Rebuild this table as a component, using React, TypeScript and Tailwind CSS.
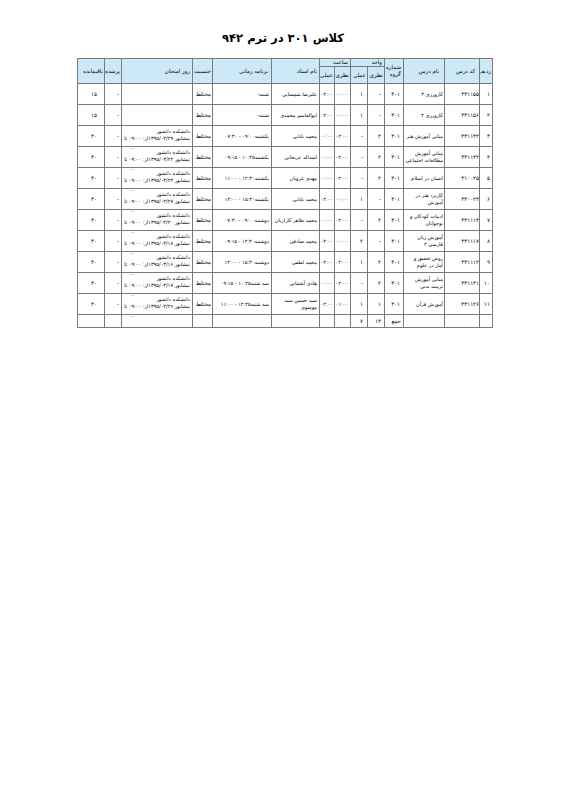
import React from "react";

type Row = {
  n: string;
  code: string;
  name: React.ReactNode;
  group: string;
  un: string;
  ua: string;
  hn: string;
  ha: string;
  teacher: React.ReactNode;
  time: string;
  exam?: string;
  filled: string;
  remain: string;
};

const rows: Row[] = [
  { n: "۱", code: "۳۳۱۱۵۵", name: "کارورزی ۳", group: "۳۰۱", un: "-", ua: "۱", hn: "۰۰:۰۰", ha: "۰۲:۰۰", teacher: "علیرضا شمسایی", time: "شنبه-", filled: "-", remain: "۱۵" },
  { n: "۲", code: "۳۳۱۱۵۶", name: "کارورزی ۴", group: "۳۰۱", un: "-", ua: "۱", hn: "۰۰:۰۰", ha: "۰۲:۰۰", teacher: "ابوالقاسم محمدی", time: "شنبه-", filled: "-", remain: "۱۵" },
  { n: "۳", code: "۳۳۱۱۳۲", name: "مبانی آموزش هنر", group: "۳۰۱", un: "۲", ua: "-", hn: "۰۲:۰۰", ha: "۰۰:۰۰", teacher: "محمد بابایی", time: "یکشنبه۰۹:۰۰ - ۰۷:۳۰", exam: "۱۳۹۵/۰۳/۲۹", filled: "-", remain: "۳۰" },
  { n: "۴", code: "۳۳۱۱۴۲", name: <>مبانی آموزش<br />مطالعات اجتماعی</>, group: "۳۰۱", un: "۲", ua: "-", hn: "۰۲:۰۰", ha: "۰۰:۰۰", teacher: "اسداله عربخانی", time: "یکشنبه۱۰:۴۵ - ۰۹:۱۵", exam: "۱۳۹۵/۰۳/۲۲", filled: "-", remain: "۳۰" },
  { n: "۵", code: "۳۱۰۰۲۵", name: "انسان در اسلام", group: "۳۰۱", un: "۲", ua: "-", hn: "۰۲:۰۰", ha: "۰۰:۰۰", teacher: "مهدی غروبان", time: "یکشنبه۱۲:۳۰ - ۱۱:۰۰", exam: "۱۳۹۵/۰۳/۲۴", filled: "-", remain: "۳۰" },
  { n: "۶", code: "۳۳۰۰۲۴", name: <>کاربرد هنر در<br />آموزش</>, group: "۳۰۱", un: "-", ua: "۱", hn: "۰۰:۰۰", ha: "۰۲:۰۰", teacher: "محمد بابایی", time: "یکشنبه۱۵:۳۰ - ۱۴:۰۰", exam: "۱۳۹۵/۰۳/۲۷", filled: "-", remain: "۳۰" },
  { n: "۷", code: "۳۳۱۱۱۴", name: <>ادبیات کودکان و<br />نوجوانان</>, group: "۳۰۱", un: "۲", ua: "-", hn: "۰۲:۰۰", ha: "۰۰:۰۰", teacher: "محمد طاهر کارازیان", time: "دوشنبه۰۹:۰۰ - ۰۷:۳۰", exam: "۱۳۹۵/۰۳/۲۰", filled: "-", remain: "۳۰" },
  { n: "۸", code: "۳۳۱۱۱۷", name: <>آموزش زبان<br />فارسی ۲</>, group: "۳۰۱", un: "-", ua: "۲", hn: "۰۰:۰۰", ha: "۰۴:۰۰", teacher: "محمد صادقی", time: "دوشنبه۱۲:۳۰ - ۰۹:۱۵", exam: "۱۳۹۵/۰۳/۱۸", filled: "-", remain: "۳۰" },
  { n: "۹", code: "۳۳۱۱۱۲", name: <>روش تحقیق و<br />آمار در علوم</>, group: "۳۰۱", un: "۲", ua: "۱", hn: "۰۲:۰۰", ha: "۰۲:۰۰", teacher: "محمد لطفی", time: "دوشنبه۱۵:۳۰ - ۱۴:۰۰", exam: "۱۳۹۵/۰۳/۱۶", filled: "-", remain: "۳۰" },
  { n: "۱۰", code: "۳۳۱۱۳۱", name: <>مبانی آموزش<br />تربیت بدنی</>, group: "۳۰۱", un: "۲", ua: "-", hn: "۰۲:۰۰", ha: "۰۰:۰۰", teacher: "هادی آشتیانی", time: "سه شنبه۱۰:۴۵ - ۰۹:۱۵", exam: "۱۳۹۵/۰۳/۱۷", filled: "-", remain: "۳۰" },
  { n: "۱۱", code: "۳۳۱۱۲۶", name: "آموزش قرآن", group: "۳۰۱", un: "۱", ua: "۱", hn: "۰۱:۰۰", ha: "۰۲:۰۰", teacher: <>سید حسین سید<br />موسوی</>, time: "سه شنبه۱۲:۴۵ - ۱۱:۰۰", exam: "۱۳۹۵/۰۳/۲۶", filled: "-", remain: "۳۰" },
];

const td = "border border-[#7a7a7a] align-middle text-right whitespace-nowrap overflow-hidden text-[5.5px]";
const th = "border border-[#7a7a7a] align-middle text-right font-normal whitespace-nowrap overflow-hidden bg-[#cde9f8] text-[5.5px]";

export default function App() {
  return (
    <div className="w-[566px] h-[800px] bg-white text-black font-['DejaVu_Sans',sans-serif]" dir="rtl">
      <div className="pt-[30px]">
        <div className="text-center text-[11.5px] leading-[16px] font-bold">کلاس ۳۰۱ در ترم ۹۴۲</div>
      </div>
      <div className="mt-[12px] mr-[73px]">
        <table className="table-fixed border-collapse w-[415px] leading-[7px]">
          <colgroup>
            <col className="w-[13px]" />
            <col className="w-[35px]" />
            <col className="w-[41px]" />
            <col className="w-[19px]" />
            <col className="w-[17px]" />
            <col className="w-[17px]" />
            <col className="w-[16px]" />
            <col className="w-[15px]" />
            <col className="w-[48px]" />
            <col className="w-[59px]" />
            <col className="w-[20px]" />
            <col className="w-[71px]" />
            <col className="w-[17px]" />
            <col className="w-[27px]" />
          </colgroup>
          <thead>
            <tr className="h-[8px]">
              <th rowSpan={2} className={th + " pr-[1px]"}>ردیف</th>
              <th rowSpan={2} className={th + " pr-[4px]"}>کد درس</th>
              <th rowSpan={2} className={th + " pr-[5px]"}>نام درس</th>
              <th rowSpan={2} className={th + " pr-[2px] whitespace-normal"}>
                شماره
                <br />
                گروه
              </th>
              <th colSpan={2} className={th + " pr-[2px] leading-[7px]"}>واحد</th>
              <th colSpan={2} className={th + " pr-[2px] leading-[7px]"}>ساعت</th>
              <th rowSpan={2} className={th + " pr-[2px]"}>نام استاد</th>
              <th rowSpan={2} className={th + " pr-[3px]"}>برنامه زمانی</th>
              <th rowSpan={2} className={th + " pr-[1px]"}>جنسیت</th>
              <th rowSpan={2} className={th + " pr-[2px]"}>روز امتحان</th>
              <th rowSpan={2} className={th + " pr-[1px]"}>پرشده</th>
              <th rowSpan={2} className={th + " pr-[1px]"}>باقیمانده</th>
            </tr>
            <tr className="h-[17px]">
              <th className={th + " pr-[1px]"}>نظری</th>
              <th className={th + " pr-[1px]"}>عملی</th>
              <th className={th + " pr-[1px]"}>نظری</th>
              <th className={th + " pr-[1px]"}>عملی</th>
            </tr>
          </thead>
          <tbody>
            {rows.map((r) => (
              <tr key={r.n} className="h-[21px]">
                <td className={td + " pr-[2px]"}>{r.n}</td>
                <td className={td + " text-center"}>{r.code}</td>
                <td className={td + " pr-[1px] !text-[5px]"}>{r.name}</td>
                <td className={td + " pr-[3px]"}>{r.group}</td>
                <td className={td + " pr-[3px]"}>{r.un}</td>
                <td className={td + " pr-[4px]"}>{r.ua}</td>
                <td className={td + " pr-[2px] !text-[5px]"}>{r.hn}</td>
                <td className={td + " pr-[1px] !text-[5px]"}>{r.ha}</td>
                <td className={td + " pr-[2px] !text-[5px]"}>{r.teacher}</td>
                <td className={td + " pr-[2px] !text-[5px]"}>{r.time}</td>
                <td className={td + " pr-[1px]"}>مختلط</td>
                <td className={td + " pr-[2px] align-top !overflow-visible relative !text-[5px]"}>
                  {r.exam ? (
                    <>
                      <div className="pt-[2px]">دانشکده دانشور</div>
                      <div>{"نیشابور " + r.exam + "از: ۰۹:۰۰ تا"}</div>
                      <span className="absolute left-[9px] top-[19px] text-[5px] leading-[4px]">..</span>
                    </>
                  ) : null}
                </td>
                <td className={td + " pr-[2px]"}>{r.filled}</td>
                <td className={td + " pr-[7px]"}>{r.remain}</td>
              </tr>
            ))}
            <tr className="h-[13px]">
              <td className={td}></td>
              <td className={td}></td>
              <td className={td}></td>
              <td className={td + " pr-[2px]"}>جمع</td>
              <td className={td + " pr-[3px]"}>۱۳</td>
              <td className={td + " pr-[4px]"}>۷</td>
              <td className={td}></td>
              <td className={td}></td>
              <td className={td}></td>
              <td className={td}></td>
              <td className={td}></td>
              <td className={td}></td>
              <td className={td}></td>
              <td className={td}></td>
            </tr>
          </tbody>
        </table>
      </div>
    </div>
  );
}
